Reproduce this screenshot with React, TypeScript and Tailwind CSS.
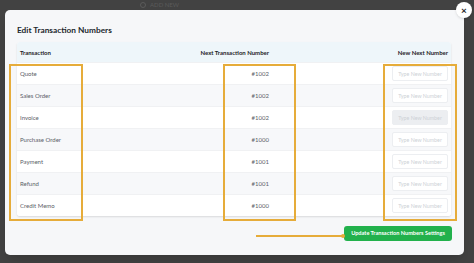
import React from "react";

const rows = [
  { name: "Quote", next: "#1002" },
  { name: "Sales Order", next: "#1002" },
  { name: "Invoice", next: "#1002", disabled: true },
  { name: "Purchase Order", next: "#1000" },
  { name: "Payment", next: "#1001" },
  { name: "Refund", next: "#1001" },
  { name: "Credit Memo", next: "#1000" },
];

export default function App() {
  return (
    <div
      className="relative w-[474px] h-[263px] overflow-hidden bg-[#424242]"
      style={{ fontFamily: "Lato, 'Open Sans', sans-serif" }}
    >
      {/* faint page content behind the overlay */}
      <div className="absolute left-[140px] top-0 flex items-center gap-1 text-[6px] text-[#5a5a5a]">
        <span className="w-[6px] h-[6px] rounded-full border border-[#5a5a5a]" />
        <span>ADD NEW</span>
      </div>

      <div className="absolute left-[5px] top-[10px] w-[459px] h-[245px] rounded-[5px] bg-[#f6f7f9] px-[12px] pt-[13px] shadow-lg">
        <h1 className="text-[8.3px] font-bold text-[#23282d] leading-[14px]">
          Edit Transaction Numbers
        </h1>

        <div className="mt-[5px] w-[434px] rounded-[3px] bg-white shadow-[0_1px_2px_rgba(0,0,0,0.12)] overflow-hidden">
          <div className="grid grid-cols-[100px_152px_1fr] h-[20px] items-center bg-[#eef6fa] text-[6px] font-bold text-[#1f2328]">
            <span className="pl-[3px]">Transaction</span>
            <span className="text-right">Next Transaction Number</span>
            <span className="text-right pr-[3px]">New Next Number</span>
          </div>
          {rows.map((r, i) => (
            <div
              key={r.name}
              className={
                "grid grid-cols-[100px_152px_1fr] h-[22px] items-center text-[6px] text-[#5b6068] border-t border-[#f0f1f3] " +
                (i % 2 === 1 ? "bg-[#f7f8fa]" : "bg-white")
              }
            >
              <span className="pl-[3px]">{r.name}</span>
              <span className="text-right">{r.next}</span>
              <div className="flex justify-end pr-[3px]">
                <input
                  disabled={r.disabled}
                  placeholder="Type New Number"
                  className={
                    "w-[56px] h-[15px] rounded-[2px] border border-[#eceef1] px-[2px] text-[5.3px] text-center placeholder:text-[#cdd1d6] outline-none " +
                    (r.disabled ? "bg-[#eceef1]" : "bg-white")
                  }
                />
              </div>
            </div>
          ))}
        </div>

        <div className="mt-[10px] flex justify-end">
          <button className="h-[15px] w-[108px] rounded-[3px] bg-[#22b14c] text-[5.6px] font-bold text-white">
            Update Transaction Numbers Settings
          </button>
        </div>
      </div>

      {/* close button */}
      <div className="absolute left-[456px] top-[2px] w-[16px] h-[16px] rounded-full bg-white flex items-center justify-center text-[10px] font-bold text-[#222] leading-none shadow">
        ×
      </div>

      {/* orange annotation boxes */}
      <div className="absolute left-[9px] top-[64px] w-[74px] h-[157px] border-2 border-[#e6ac3a]" />
      <div className="absolute left-[223px] top-[64px] w-[73px] h-[157px] border-2 border-[#e6ac3a]" />
      <div className="absolute left-[383px] top-[64px] w-[74px] h-[157px] border-2 border-[#e6ac3a]" />
      <div className="absolute left-[256px] top-[235px] w-[88px] h-[2px] bg-[#e6ac3a]" />
      <div className="absolute left-[341px] top-[234px] w-[4px] h-[4px] rounded-full bg-[#e6ac3a]" />
    </div>
  );
}
